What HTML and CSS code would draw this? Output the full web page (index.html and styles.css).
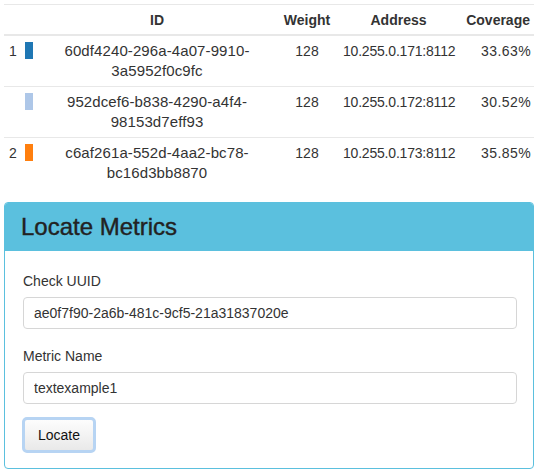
FILE: index.html
```html
<!DOCTYPE html>
<html>
<head>
<meta charset="utf-8">
<link rel="stylesheet" href="styles.css">
</head>
<body>
<div class="page">
  <table class="nodes">
    <colgroup>
      <col class="w-idx"><col class="w-sw"><col class="w-id"><col class="w-weight"><col class="w-addr"><col class="w-cov">
    </colgroup>
    <thead>
      <tr><th></th><th></th><th>ID</th><th>Weight</th><th>Address</th><th class="right">Coverage</th></tr>
    </thead>
    <tbody>
      <tr>
        <td class="idx">1</td><td class="sw"><span class="swatch sw-1"></span></td>
        <td class="uuid">60df4240-296a-4a07-9910-<br>3a5952f0c9fc</td><td>128</td><td class="addr">10.255.0.171:8112</td><td class="right cov">33.63%</td>
      </tr>
      <tr>
        <td class="idx"></td><td class="sw"><span class="swatch sw-2"></span></td>
        <td class="uuid">952dcef6-b838-4290-a4f4-<br>98153d7eff93</td><td>128</td><td class="addr">10.255.0.172:8112</td><td class="right cov">30.52%</td>
      </tr>
      <tr>
        <td class="idx">2</td><td class="sw"><span class="swatch sw-3"></span></td>
        <td class="uuid">c6af261a-552d-4aa2-bc78-<br>bc16d3bb8870</td><td>128</td><td class="addr">10.255.0.173:8112</td><td class="right cov">35.85%</td>
      </tr>
    </tbody>
  </table>

  <section class="panel">
    <div class="panel-heading"><h3 class="panel-title">Locate Metrics</h3></div>
    <div class="panel-body">
      <form class="locate-form">
        <div class="form-group">
          <label class="form-label" for="uuid">Check UUID</label>
          <input class="form-control" id="uuid" type="text" value="ae0f7f90-2a6b-481c-9cf5-21a31837020e">
        </div>
        <div class="form-group">
          <label class="form-label" for="metric">Metric Name</label>
          <input class="form-control" id="metric" type="text" value="textexample1">
        </div>
        <button class="btn" type="button">Locate</button>
      </form>
    </div>
  </section>
</div>
</body>
</html>
```

FILE: styles.css
```css
html, body {
  margin: 0;
  padding: 0;
  background: #fff;
}
body {
  font-family: "Liberation Sans", Arial, sans-serif;
  font-size: 14px;
  line-height: 20px;
  color: #333;
}
.page {
  padding: 4px 5px 0 4px;
  width: 530px;
}
.nodes {
  width: 530px;
  table-layout: fixed;
  border-collapse: separate;
  border-spacing: 0;
}
.w-idx { width: 16px; }
.w-sw { width: 18px; }
.w-id { width: 238px; }
.w-weight { width: 62px; }
.w-addr { width: 121px; }
.w-cov { width: 75px; }

.nodes th {
  font-weight: bold;
  text-align: center;
  padding: 5px 5px 4px;
  border-top: 1px solid #e8e8e8;
  border-bottom: 2px solid #e8e8e8;
  white-space: nowrap;
}
.nodes td {
  text-align: center;
  vertical-align: top;
  padding: 5px;
  border-bottom: 1px solid #e8e8e8;
  white-space: nowrap;
}
.nodes tbody tr:last-child td {
  border-bottom: 0;
}
.nodes .uuid {
  font-size: 15px;
  letter-spacing: 0.1px;
}
.nodes .addr {
  letter-spacing: -0.2px;
}
.nodes .right {
  text-align: right;
  padding-right: 4px;
}
.nodes .cov {
  letter-spacing: 0.4px;
  padding-right: 3px;
}
.nodes .idx {
  text-align: left;
  padding-right: 0;
}
.nodes .sw {
  text-align: left;
}
.swatch {
  display: block;
  width: 8px;
  height: 17px;
  margin-top: 1px;
}
.sw-1 { background: #1f77b4; }
.sw-2 { background: #aec7e8; }
.sw-3 { background: #ff7f0e; }

.panel {
  margin-top: 14px;
  border: 1px solid #5bc0de;
  border-radius: 4px;
  overflow: hidden;
}
.panel-heading {
  background: #5bc0de;
  padding: 10px 16px 11px;
}
.panel-title {
  margin: 0;
  font-size: 24px;
  line-height: 27px;
  font-weight: normal;
  color: #222;
  -webkit-text-stroke: 0.4px #222;
}
.panel-body {
  padding: 20px 16px 15px 18px;
}
.form-group {
  margin-bottom: 17px;
}
.form-label {
  display: block;
  margin-bottom: 6px;
  color: #333;
}
.form-control {
  display: block;
  box-sizing: border-box;
  width: 100%;
  height: 32px;
  padding: 0 10px;
  border: 1px solid #d6d6d6;
  border-radius: 4px;
  font-family: "Liberation Sans", Arial, sans-serif;
  font-size: 14px;
  color: #333;
  background: #fff;
  margin: 0;
}
.locate-form .form-group + .form-group {
  margin-bottom: 13px;
}
.btn {
  display: block;
  box-sizing: border-box;
  width: 74px;
  height: 36px;
  margin: 0 0 0 -1px;
  padding: 0;
  border: 3px solid #b7d4f3;
  border-radius: 5px;
  background: linear-gradient(#fdfdfd, #e9e9e9);
  font-family: "Liberation Sans", Arial, sans-serif;
  font-size: 14px;
  color: #111;
}
```
